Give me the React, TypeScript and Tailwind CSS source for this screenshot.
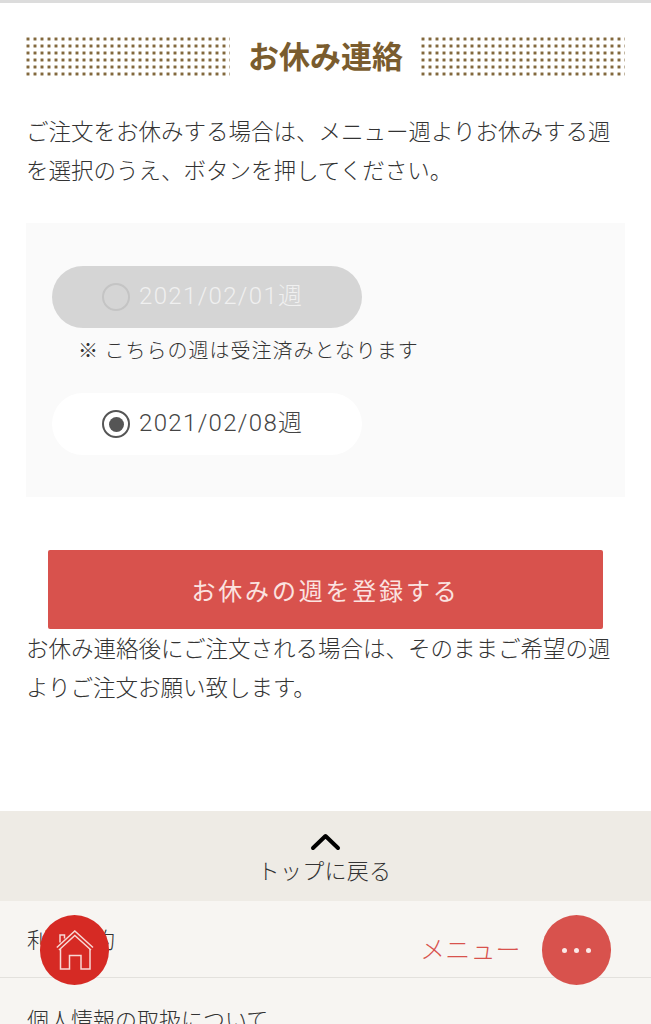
const font = "font-['Noto_Sans_CJK_JP','Noto_Sans',sans-serif]";
const dateFont = "font-['Roboto','Noto_Sans_CJK_JP',sans-serif]";

function Dots() {
  return (
    <div className="h-[39px] w-[204px] bg-[radial-gradient(circle,#7d6235_1.3px,transparent_2px)] bg-[size:7px_7px] bg-[position:-1.5px_-1.5px]" />
  );
}

function HomeIcon() {
  return (
    <svg width="38" height="40" viewBox="0 0 38 40" fill="none" stroke="#f8d8d4" strokeWidth="1.5">
      <path d="M0.8 17.5 L18.8 1 L37 17.5" />
      <path d="M3 20 L18.8 5.5 L35 20" />
      <path d="M4 12.5 V5 H8.5 V8.5" />
      <path d="M4.5 19 V39 H13.5 V25.5 H25 V39 H34 V19" />
    </svg>
  );
}

export default function App() {
  return (
    <div className={`${font} relative h-[1024px] w-[651px] overflow-hidden bg-white font-light text-[#333]`}>
      <div className="h-[3px] bg-[#dcdcdc]" />

      <div className="mt-[34px] flex items-center justify-between px-[26px]">
        <Dots />
        <h1 className="mb-[4px] text-[31px] leading-[35px] font-bold text-[#7a5c2e]">お休み連絡</h1>
        <Dots />
      </div>

      <p className="mt-[35px] px-[26px] text-[22.5px] leading-[39px]">
        ご注文をお休みする場合は、メニュー週よりお休みする週
        <br />
        を選択のうえ、ボタンを押してください。
      </p>

      <div className="mx-[26px] mt-[34px] h-[274px] w-[599px] bg-[#fafafa] px-[26px] pt-[43px]">
        <div className="flex h-[62px] w-[310px] items-center gap-[9px] rounded-full bg-[#d5d5d5] pl-[50px] text-[#f0f0f0]">
          <span className="h-[28px] w-[28px] rounded-full border-2 border-[#c4c4c4]" />
          <span className={`${dateFont} pb-[2px] text-[24px] leading-[32px] tracking-[1.35px]`}>2021/02/01週</span>
        </div>
        <p className="mt-[7px] pl-[26px] text-[20px] leading-[30px] tracking-[1px] text-[#333]">※ こちらの週は受注済みとなります</p>
        <div className="mt-[28px] flex h-[62px] w-[310px] items-center gap-[9px] rounded-full bg-white pl-[50px] text-[#444]">
          <span className="flex h-[28px] w-[28px] items-center justify-center rounded-full border-2 border-[#555]">
            <span className="h-[15px] w-[15px] rounded-full bg-[#555]" />
          </span>
          <span className={`${dateFont} pb-[2px] text-[24px] leading-[32px] tracking-[1.35px]`}>2021/02/08週</span>
        </div>
      </div>

      <button className="mx-[48px] mt-[53px] flex h-[79px] w-[555px] items-center justify-center rounded-[2px] bg-[#d8524d] text-[24px] font-normal tracking-[2.8px] text-[#fbe3e0]">
        お休みの週を登録する
      </button>

      <p className="-mt-px px-[26px] text-[22.5px] leading-[39px]">
        お休み連絡後にご注文される場合は、そのままご希望の週
        <br />
        よりご注文お願い致します。
      </p>

      <div className="mt-[105px] flex h-[90px] flex-col items-center bg-[#eeebe5]">
        <svg className="mt-[21px]" width="31" height="19" viewBox="0 0 31 19" fill="none" stroke="#000" strokeWidth="4" strokeLinecap="round" strokeLinejoin="round">
          <path d="M3 16 L15.5 4 L28 16" />
        </svg>
        <span className="mt-[2px] -ml-[2px] text-[22px] leading-[32px] tracking-[0.3px]">トップに戻る</span>
      </div>

      <div className="bg-[#f7f5f2] text-[22px]">
        <div className="flex h-[77px] items-center border-b border-[#e3e1dd] px-[27px] pb-[2px]">利用規約</div>
        <div className="px-[27px] pt-[22px] leading-[36px]">個人情報の取扱について</div>
      </div>

      <a className="absolute top-[915px] left-[40px] flex h-[70px] w-[69px] items-center justify-center rounded-full bg-[#d62a24]">
        <HomeIcon />
      </a>
      <span className="absolute top-[930px] left-[420px] text-[25px] leading-[36px] tracking-[0.2px] text-[#d8524d]">メニュー</span>
      <a className="absolute top-[915px] left-[542px] flex h-[70px] w-[69px] items-center justify-center gap-[7px] rounded-full bg-[#d8524d]">
        <span className="h-[5px] w-[5px] rounded-full bg-[#fbe9e7]" />
        <span className="h-[5px] w-[5px] rounded-full bg-[#fbe9e7]" />
        <span className="h-[5px] w-[5px] rounded-full bg-[#fbe9e7]" />
      </a>
    </div>
  );
}
